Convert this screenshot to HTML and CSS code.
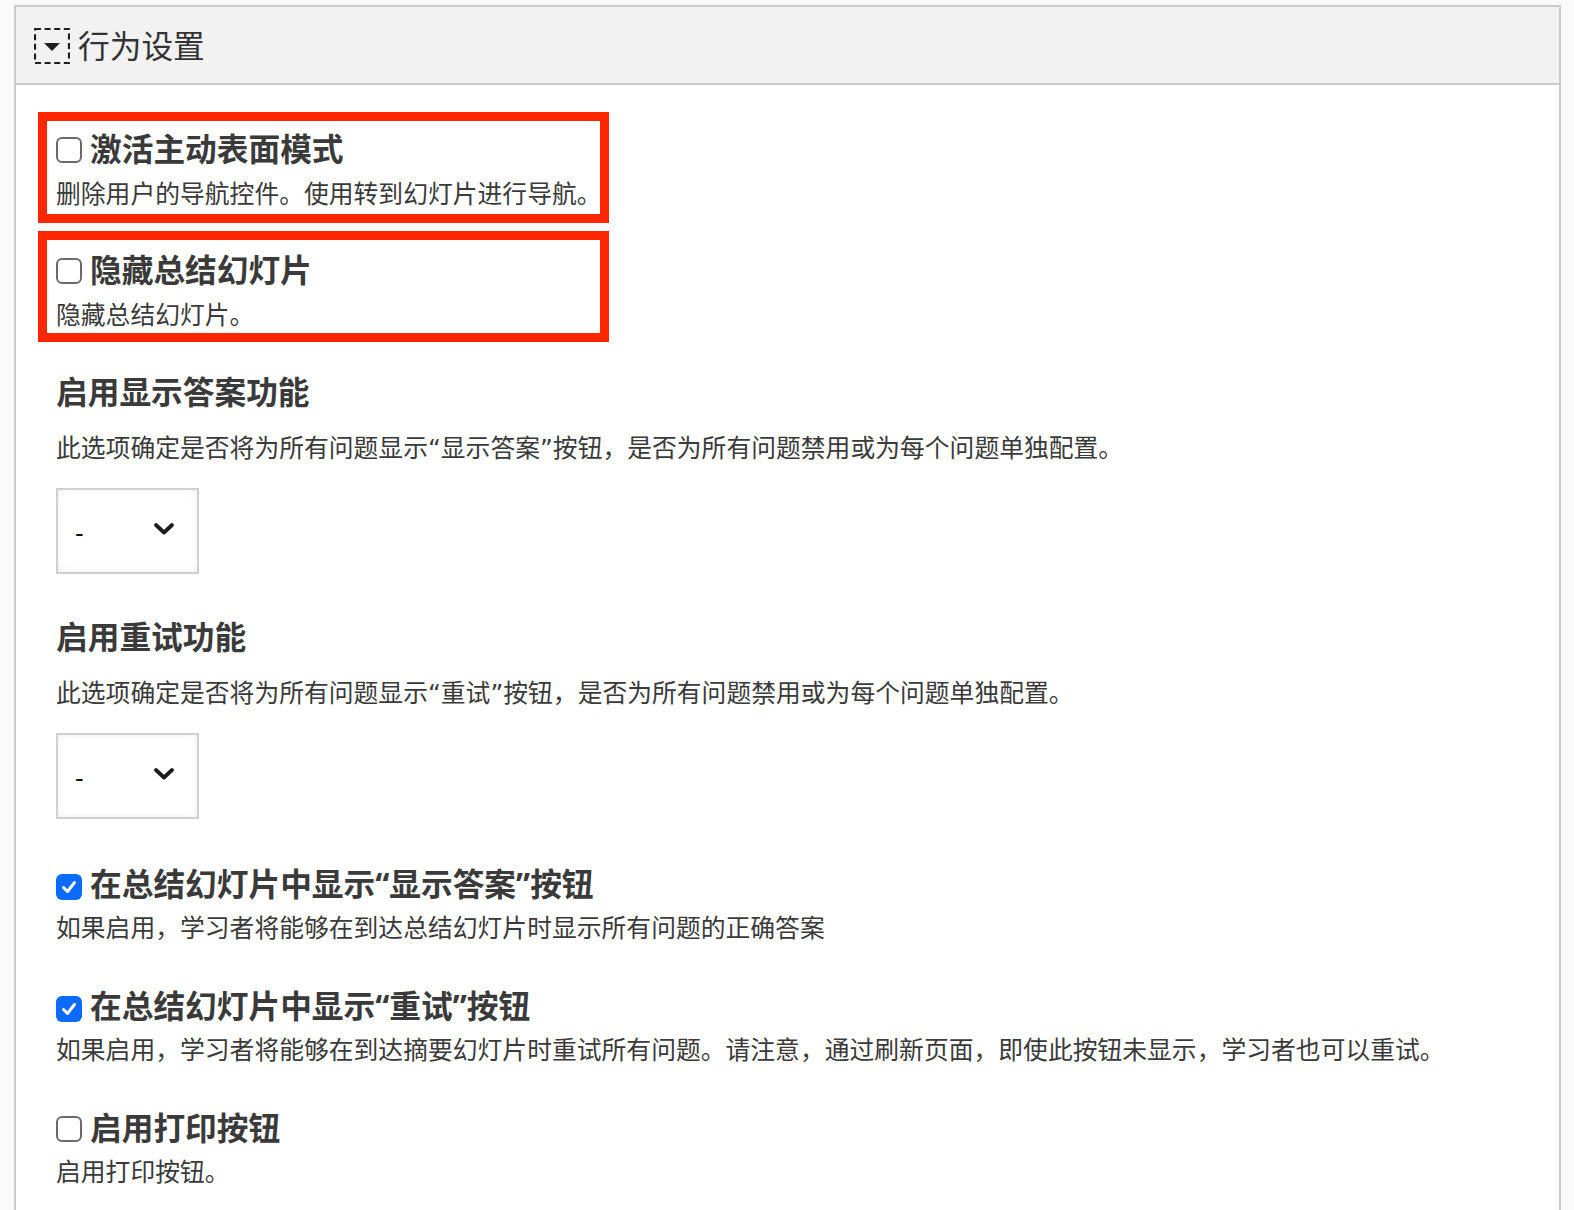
FILE: index.html
```html
<!DOCTYPE html>
<html lang="zh-CN">
<head>
    <meta charset="UTF-8">
    <meta name="viewport" content="width=device-width, initial-scale=1.0">
    <title>行为设置</title>
    <link rel="stylesheet" href="styles.css">
</head>
<body>
    <div class="group">
        <div class="group-head">
            <svg class="toggle" width="36" height="36" viewBox="0 0 36 36">
                <rect x="1" y="1" width="34" height="34" fill="none" stroke="#1e1e1e" stroke-width="2.2" stroke-dasharray="6 3.6"/>
                <path d="M10 15 L26 15 L18 23 Z" fill="#1e1e1e"/>
            </svg>
            <span class="group-title">行为设置</span>
        </div>

        <div class="group-body">
            <div class="field marked">
                <label class="field-label"><span class="check"></span>激活主动表面模式</label>
                <div class="field-desc">删除用户的导航控件。使用转到幻灯片进行导航。</div>
            </div>

            <div class="field marked second">
                <label class="field-label"><span class="check"></span>隐藏总结幻灯片</label>
                <div class="field-desc">隐藏总结幻灯片。</div>
            </div>

            <div class="field select-field first-select">
                <div class="field-label">启用显示答案功能</div>
                <div class="field-desc spaced">此选项确定是否将为所有问题显示“显示答案”按钮，是否为所有问题禁用或为每个问题单独配置。</div>
                <div class="select">
                    <span>-</span>
                    <svg width="24" height="16" viewBox="0 0 24 16">
                        <path d="M4 4 L12 11.5 L20 4" fill="none" stroke="#1c1c1c" stroke-width="3.8" stroke-linecap="round" stroke-linejoin="round"/>
                    </svg>
                </div>
            </div>

            <div class="field select-field">
                <div class="field-label">启用重试功能</div>
                <div class="field-desc spaced">此选项确定是否将为所有问题显示“重试”按钮，是否为所有问题禁用或为每个问题单独配置。</div>
                <div class="select">
                    <span>-</span>
                    <svg width="24" height="16" viewBox="0 0 24 16">
                        <path d="M4 4 L12 11.5 L20 4" fill="none" stroke="#1c1c1c" stroke-width="3.8" stroke-linecap="round" stroke-linejoin="round"/>
                    </svg>
                </div>
            </div>

            <div class="field after-select">
                <label class="field-label"><span class="check checked"><svg width="18" height="18" viewBox="0 0 18 18"><path d="M3.5 9.5 L7.5 13.5 L14.5 4.5" fill="none" stroke="#fff" stroke-width="3" stroke-linecap="round" stroke-linejoin="round"/></svg></span>在总结幻灯片中显示“显示答案”按钮</label>
                <div class="field-desc">如果启用，学习者将能够在到达总结幻灯片时显示所有问题的正确答案</div>
            </div>

            <div class="field">
                <label class="field-label"><span class="check checked"><svg width="18" height="18" viewBox="0 0 18 18"><path d="M3.5 9.5 L7.5 13.5 L14.5 4.5" fill="none" stroke="#fff" stroke-width="3" stroke-linecap="round" stroke-linejoin="round"/></svg></span>在总结幻灯片中显示“重试”按钮</label>
                <div class="field-desc">如果启用，学习者将能够在到达摘要幻灯片时重试所有问题。请注意，通过刷新页面，即使此按钮未显示，学习者也可以重试。</div>
            </div>

            <div class="field">
                <label class="field-label"><span class="check"></span>启用打印按钮</label>
                <div class="field-desc">启用打印按钮。</div>
            </div>
        </div>
    </div>
</body>
</html>
```

FILE: styles.css
```css
body {
    margin: 0;
    padding: 0;
    background-color: #fafafa;
    font-family: "DejaVu Sans", "Noto Sans CJK SC", sans-serif;
    color: #3a3a3a;
    overflow: hidden;
}

.group {
    margin: 5px 0 0 14px;
    width: 1547px;
    box-sizing: border-box;
    border: 2px solid #cbcbcb;
    border-bottom: none;
    background-color: #fff;
}

.group-head {
    display: flex;
    align-items: center;
    height: 76px;
    padding-left: 18px;
    background-color: #f2f2f2;
    border-bottom: 2px solid #cbcbcb;
}

.group-head .toggle {
    display: block;
    margin-top: 1px;
}

.group-title {
    margin-left: 8px;
    font-family: "Noto Sans CJK SC", sans-serif;
    font-size: 31.7px;
    font-weight: 400;
    color: #333;
    line-height: 1;
}

.group-body {
    padding: 27px 18px 60px 40px;
}

.field {
    margin-top: 39px;
}

.field-label {
    display: flex;
    align-items: center;
    font-family: "Noto Sans", "Noto Sans CJK SC", sans-serif;
    font-size: 31.7px;
    font-weight: bold;
    line-height: 41px;
    height: 41px;
    color: #3a3a3a;
    white-space: nowrap;
}

.field-desc {
    margin-top: 8px;
    font-size: 24.8px;
    line-height: 34px;
    color: #3a3a3a;
    white-space: nowrap;
}

.field-desc.spaced {
    margin-top: 20px;
}

/* red marker boxes */
.field.marked {
    margin-top: 0;
    margin-left: -18px;
    width: 571px;
    height: 111px;
    box-sizing: border-box;
    border: 9px solid #ff2600;
    padding: 7px 9px 0;
}

.field.marked .field-desc {
    margin-top: 9px;
}

.field.marked.second {
    margin-top: 8px;
    padding-top: 9px;
}

.check {
    display: inline-flex;
    align-items: center;
    justify-content: center;
    width: 26px;
    height: 26px;
    box-sizing: border-box;
    border: 2px solid #6a6a6a;
    border-radius: 6px;
    margin-right: 8px;
    margin-top: 2px;
    background-color: #fff;
    flex-shrink: 0;
}

.check.checked {
    border: none;
    background-color: #0b6bff;
    margin-top: 6px;
}

.select-field.first-select {
    margin-top: 29px;
}

.select-field {
    margin-top: 42px;
}

.field.after-select {
    margin-top: 44px;
}

.select {
    display: flex;
    align-items: center;
    justify-content: space-between;
    margin-top: 22px;
    width: 143px;
    height: 86px;
    box-sizing: border-box;
    border: 2px solid #cfcfcf;
    padding: 0 21px 0 17px;
    background-color: #fff;
    box-shadow: inset 0 0 8px rgba(0, 0, 0, 0.06);
    font-size: 24px;
    color: #111;
}

.select span {
    margin-top: 6px;
}

.select svg {
    display: block;
    margin-top: -4px;
}
```
